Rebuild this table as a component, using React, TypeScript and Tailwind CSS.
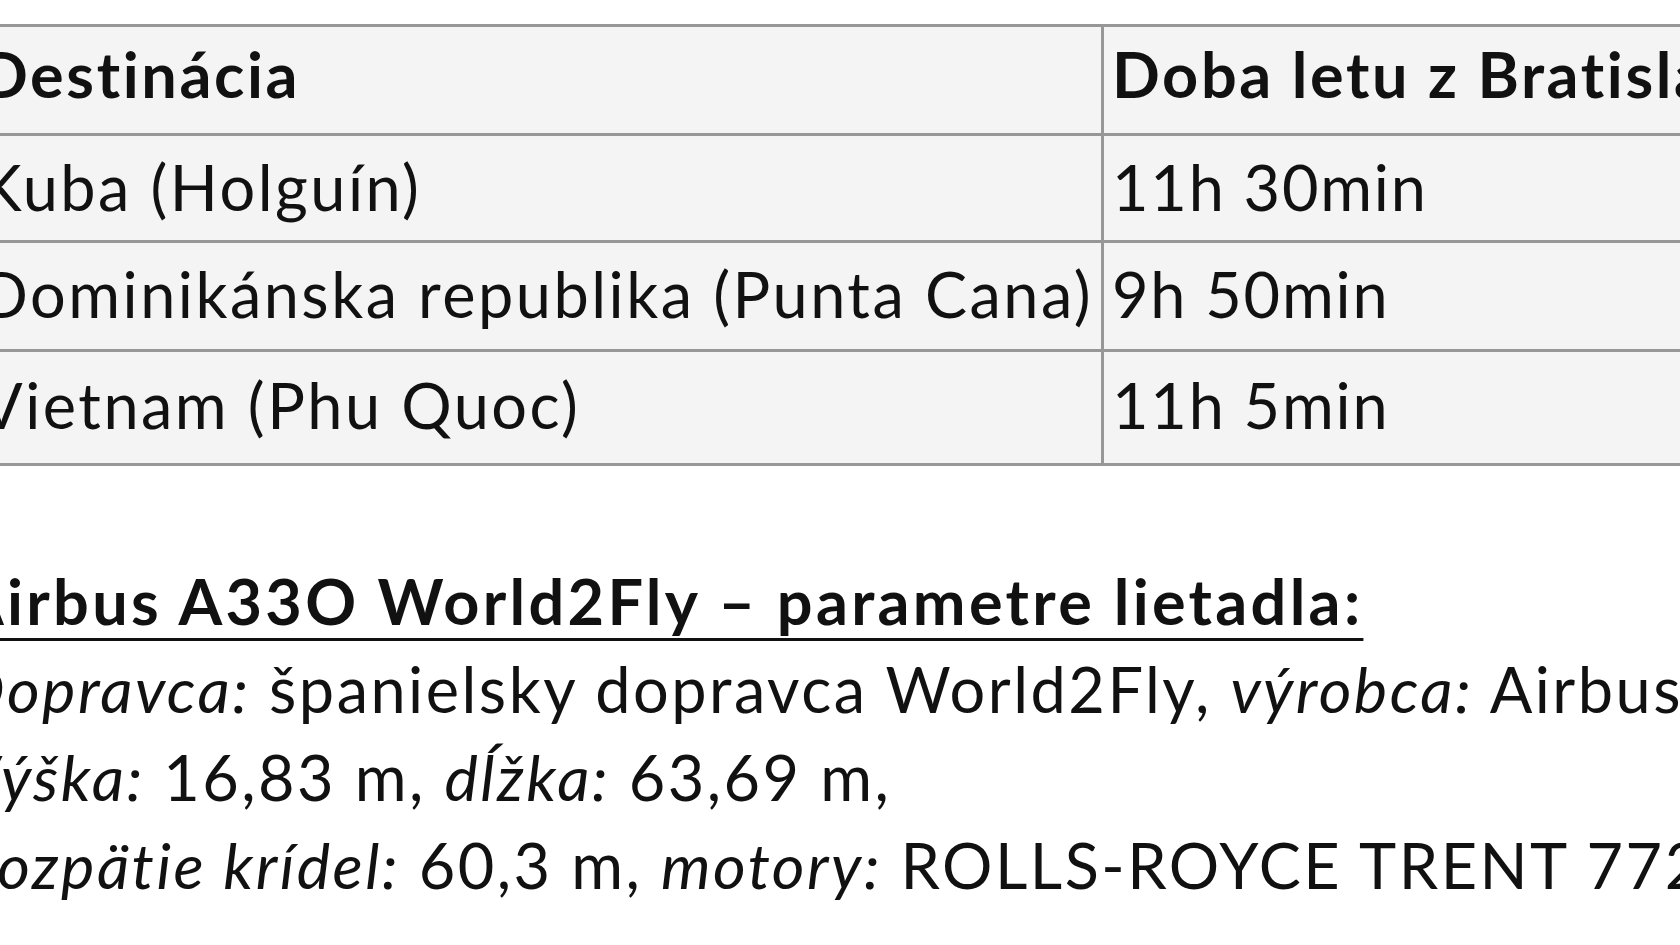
import React from 'react'

interface Row {
  destination: string
  duration: string
  height: string
  pad: string
  header?: boolean
}

const rows: Row[] = [
  { destination: 'Destinácia', duration: 'Doba letu z Bratislavy', height: 'h-[106px]', pad: 'pt-[3px]', header: true },
  { destination: 'Kuba (Holguín)', duration: '11h 30min', height: 'h-[104px]', pad: 'pt-[7px]' },
  { destination: 'Dominikánska republika (Punta Cana)', duration: '9h 50min', height: 'h-[106px]', pad: 'pt-[7px]' },
  { destination: 'Vietnam (Phu Quoc)', duration: '11h 5min', height: 'h-[111px]', pad: 'pt-[9px]' },
]

function FlightTable(): React.JSX.Element {
  return (
    <div className="ml-[-30px] border-t-[3px] border-b-[3px] border-[#979797] bg-[#f4f4f4]">
      {rows.map((row, i) => (
        <div
          key={row.destination}
          className={`grid grid-cols-[1131px_1fr] ${i > 0 ? 'border-t-[3px] border-[#979797]' : ''}`}
        >
          <div
            className={`${row.height} ${row.pad} pl-[10px] whitespace-nowrap ${
              row.header ? 'font-bold tracking-[2.6px]' : 'tracking-[2.5px]'
            }`}
          >
            {row.destination}
          </div>
          <div
            className={`${row.height} ${row.pad} pl-[8px] border-l-[3px] border-[#979797] whitespace-nowrap ${
              row.header ? 'font-bold tracking-[2.6px]' : 'tracking-[1.8px]'
            }`}
          >
            {row.duration}
          </div>
        </div>
      ))}
    </div>
  )
}

export default function App(): React.JSX.Element {
  return (
    <div
      className="w-[1680px] h-[945px] overflow-hidden bg-white text-[#111] text-[63px] leading-[88px]"
      style={{ fontFamily: 'Lato, "Open Sans", sans-serif' }}
    >
      <div className="pt-[24px]">
        <FlightTable />
      </div>

      <div className="ml-[-40px] mt-[91px] whitespace-nowrap tracking-[2.5px]">
        <p className="font-bold tracking-[3.3px] underline decoration-[3px] underline-offset-[13px]">
          Airbus A33O World2Fly – parametre lietadla:
        </p>
        <p>
          <i>Dopravca:</i> španielsky dopravca World2Fly, <i>výrobca:</i> Airbus,
        </p>
        <p>
          <i>Výška:</i> 16,83 m, <i>dĺžka:</i> 63,69 m,
        </p>
        <p>
          <i>Rozpätie krídel:</i> 60,3 m, <i>motory:</i> ROLLS-ROYCE TRENT 772B
        </p>
      </div>
    </div>
  )
}
